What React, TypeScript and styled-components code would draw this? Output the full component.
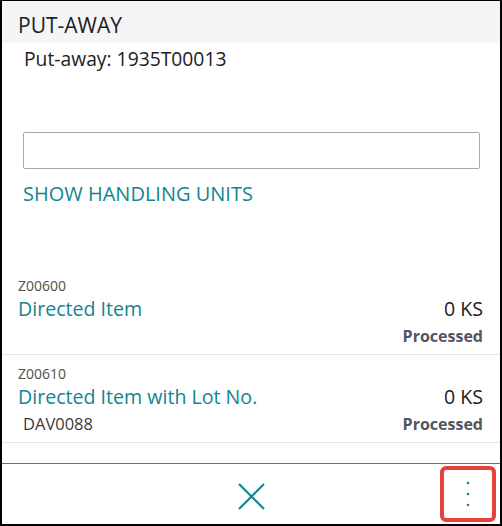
import styled, { createGlobalStyle } from 'styled-components';

const GlobalStyle = createGlobalStyle`
  body {
    margin: 0;
    background: #ffffff;
    font-family: 'Open Sans', 'Noto Sans', sans-serif;
  }
`;

const Frame = styled.div`
  width: 502px;
  height: 526px;
  box-sizing: border-box;
  border: 2px solid #000;
  border-top-width: 1px;
  display: flex;
  flex-direction: column;
  background: #fff;
  color: #212121;
`;

const Header = styled.header`
  height: 42px;
  box-sizing: border-box;
  padding: 8px 0 0 16px;
  background: #f4f5f7;
  font-size: 21px;
  line-height: 33px;
`;

const Title = styled.div`
  margin-top: 4px;
  padding-left: 22px;
  font-size: 19.3px;
  line-height: 24px;
`;

const Field = styled.input`
  display: block;
  margin: 61px 0 0 21px;
  width: 457px;
  height: 37px;
  box-sizing: border-box;
  border: 1px solid #a8a8a8;
  border-radius: 2px;
  font: inherit;
  outline: none;
`;

const LinkButton = styled.div`
  margin-top: 13px;
  padding-left: 21px;
  font-size: 20px;
  line-height: 24px;
  color: #128590;
`;

const List = styled.div`
  margin-top: 61px;
`;

const Item = styled.div`
  padding: 10px 17px 7px 16px;
  border-bottom: 1px solid #e6e6e6;
`;

const Code = styled.div`
  font-size: 14px;
  line-height: 18px;
  color: #4f4f4f;
`;

const Row = styled.div<{ $gap?: number }>`
  display: flex;
  justify-content: space-between;
  align-items: baseline;
  margin-top: ${(p) => p.$gap ?? 0}px;
`;

const Name = styled.span`
  font-size: 19.6px;
  line-height: 28px;
  color: #128590;
`;

const Qty = styled.span`
  font-size: 19.6px;
  line-height: 28px;
  color: #212121;
`;

const Lot = styled.span`
  padding-left: 5px;
  font-size: 16.5px;
  line-height: 22px;
  color: #3a3a3a;
`;

const Status = styled.span`
  margin-left: auto;
  font-size: 16px;
  line-height: 22px;
  font-weight: 700;
  color: #4f5660;
`;

const Footer = styled.footer`
  margin-top: auto;
  height: 61px;
  box-sizing: border-box;
  border-top: 1px solid #6e6e6e;
  display: grid;
  grid-template-columns: 1fr auto 1fr;
  align-items: center;
`;

const CloseButton = styled.button`
  grid-column: 2;
  background: none;
  border: none;
  padding: 0;
  margin-top: 5px;
  display: flex;
`;

const MoreButton = styled.button`
  justify-self: end;
  margin-right: 4px;
  width: 56px;
  height: 56px;
  box-sizing: border-box;
  border: 4px solid #e8403c;
  border-radius: 6px;
  background: #fff;
  padding: 0 1px 0 0;
  display: flex;
  align-items: center;
  justify-content: center;
`;

const items = [
  { code: 'Z00600', name: 'Directed Item', qty: '0 KS', status: 'Processed' },
  { code: 'Z00610', name: 'Directed Item with Lot No.', qty: '0 KS', lot: 'DAV0088', status: 'Processed' },
];

const App = () => {
  return (
    <>
      <GlobalStyle />
      <Frame>
        <Header>PUT-AWAY</Header>
        <Title>Put-away: 1935T00013</Title>
        <Field />
        <LinkButton>SHOW HANDLING UNITS</LinkButton>
        <List>
          {items.map((it) => (
            <Item key={it.code}>
              <Code>{it.code}</Code>
              <Row>
                <Name>{it.name}</Name>
                <Qty>{it.qty}</Qty>
              </Row>
              <Row $gap={2}>
                {it.lot && <Lot>{it.lot}</Lot>}
                <Status>{it.status}</Status>
              </Row>
            </Item>
          ))}
        </List>
        <Footer>
          <CloseButton aria-label="Close">
            <svg width="27" height="27" viewBox="0 0 27 27">
              <path d="M1 1 L26 26 M26 1 L1 26" stroke="#128590" strokeWidth="2.2" fill="none" />
            </svg>
          </CloseButton>
          <MoreButton aria-label="More">
            <svg width="4" height="26" viewBox="0 0 4 26">
              <circle cx="2" cy="2" r="1.3" fill="#128590" />
              <circle cx="2" cy="13" r="1.3" fill="#128590" />
              <circle cx="2" cy="24" r="1.3" fill="#128590" />
            </svg>
          </MoreButton>
        </Footer>
      </Frame>
    </>
  );
};

export default App;
